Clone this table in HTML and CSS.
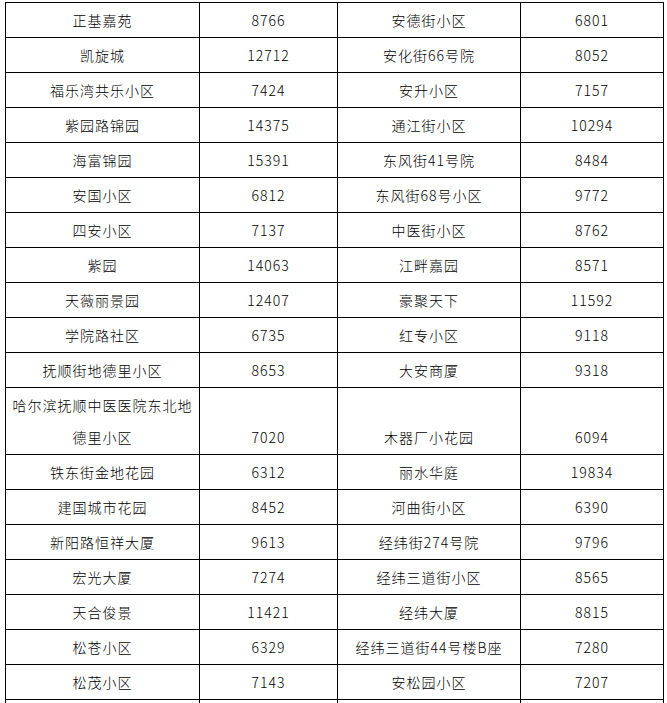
FILE: index.html
```html
<!DOCTYPE html>
<html lang="zh-CN">
<head>
<meta charset="utf-8">
<title>小区列表</title>
<link rel="stylesheet" href="styles.css">
</head>
<body>
<table class="list">
<colgroup>
<col class="c1"><col class="c2"><col class="c3"><col class="c4">
</colgroup>
<tbody>
<tr><td>正基嘉苑</td><td>8766</td><td>安德街小区</td><td>6801</td></tr>
<tr><td>凯旋城</td><td>12712</td><td>安化街66号院</td><td>8052</td></tr>
<tr><td>福乐湾共乐小区</td><td>7424</td><td>安升小区</td><td>7157</td></tr>
<tr><td>紫园路锦园</td><td>14375</td><td>通江街小区</td><td>10294</td></tr>
<tr><td>海富锦园</td><td>15391</td><td>东风街41号院</td><td>8484</td></tr>
<tr><td>安国小区</td><td>6812</td><td>东风街68号小区</td><td>9772</td></tr>
<tr><td>四安小区</td><td>7137</td><td>中医街小区</td><td>8762</td></tr>
<tr><td>紫园</td><td>14063</td><td>江畔嘉园</td><td>8571</td></tr>
<tr><td>天薇丽景园</td><td>12407</td><td>豪聚天下</td><td>11592</td></tr>
<tr><td>学院路社区</td><td>6735</td><td>红专小区</td><td>9118</td></tr>
<tr><td>抚顺街地德里小区</td><td>8653</td><td>大安商厦</td><td>9318</td></tr>
<tr><td>哈尔滨抚顺中医医院东北地德里小区</td><td>7020</td><td>木器厂小花园</td><td>6094</td></tr>
<tr><td>铁东街金地花园</td><td>6312</td><td>丽水华庭</td><td>19834</td></tr>
<tr><td>建国城市花园</td><td>8452</td><td>河曲街小区</td><td>6390</td></tr>
<tr><td>新阳路恒祥大厦</td><td>9613</td><td>经纬街274号院</td><td>9796</td></tr>
<tr><td>宏光大厦</td><td>7274</td><td>经纬三道街小区</td><td>8565</td></tr>
<tr><td>天合俊景</td><td>11421</td><td>经纬大厦</td><td>8815</td></tr>
<tr><td>松苍小区</td><td>6329</td><td>经纬三道街44号楼B座</td><td>7280</td></tr>
<tr><td>松茂小区</td><td>7143</td><td>安松园小区</td><td>7207</td></tr>
<tr><td>&nbsp;</td><td>&nbsp;</td><td>&nbsp;</td><td>&nbsp;</td></tr>
</tbody>
</table>
</body>
</html>
```
FILE: styles.css
```css
html, body {
  margin: 0;
  padding: 0;
  background: #ffffff;
}

body {
  padding: 2px 0 0 5px;
  font-family: "Noto Sans CJK SC", "Noto Sans", sans-serif;
  font-size: 14px;
  font-weight: 300;
  color: #000000;
}

.list {
  border-collapse: collapse;
  table-layout: fixed;
  width: 658px;
}

.c1 { width: 194px; }
.c2 { width: 138px; }
.c3 { width: 183px; }
.c4 { width: 143px; }

.list td {
  border: 1px solid #000000;
  padding: 1px 5px;
  line-height: 32px;
  height: 32px;
  text-align: center;
  vertical-align: bottom;
  letter-spacing: 1px;
  white-space: normal;
}
```
